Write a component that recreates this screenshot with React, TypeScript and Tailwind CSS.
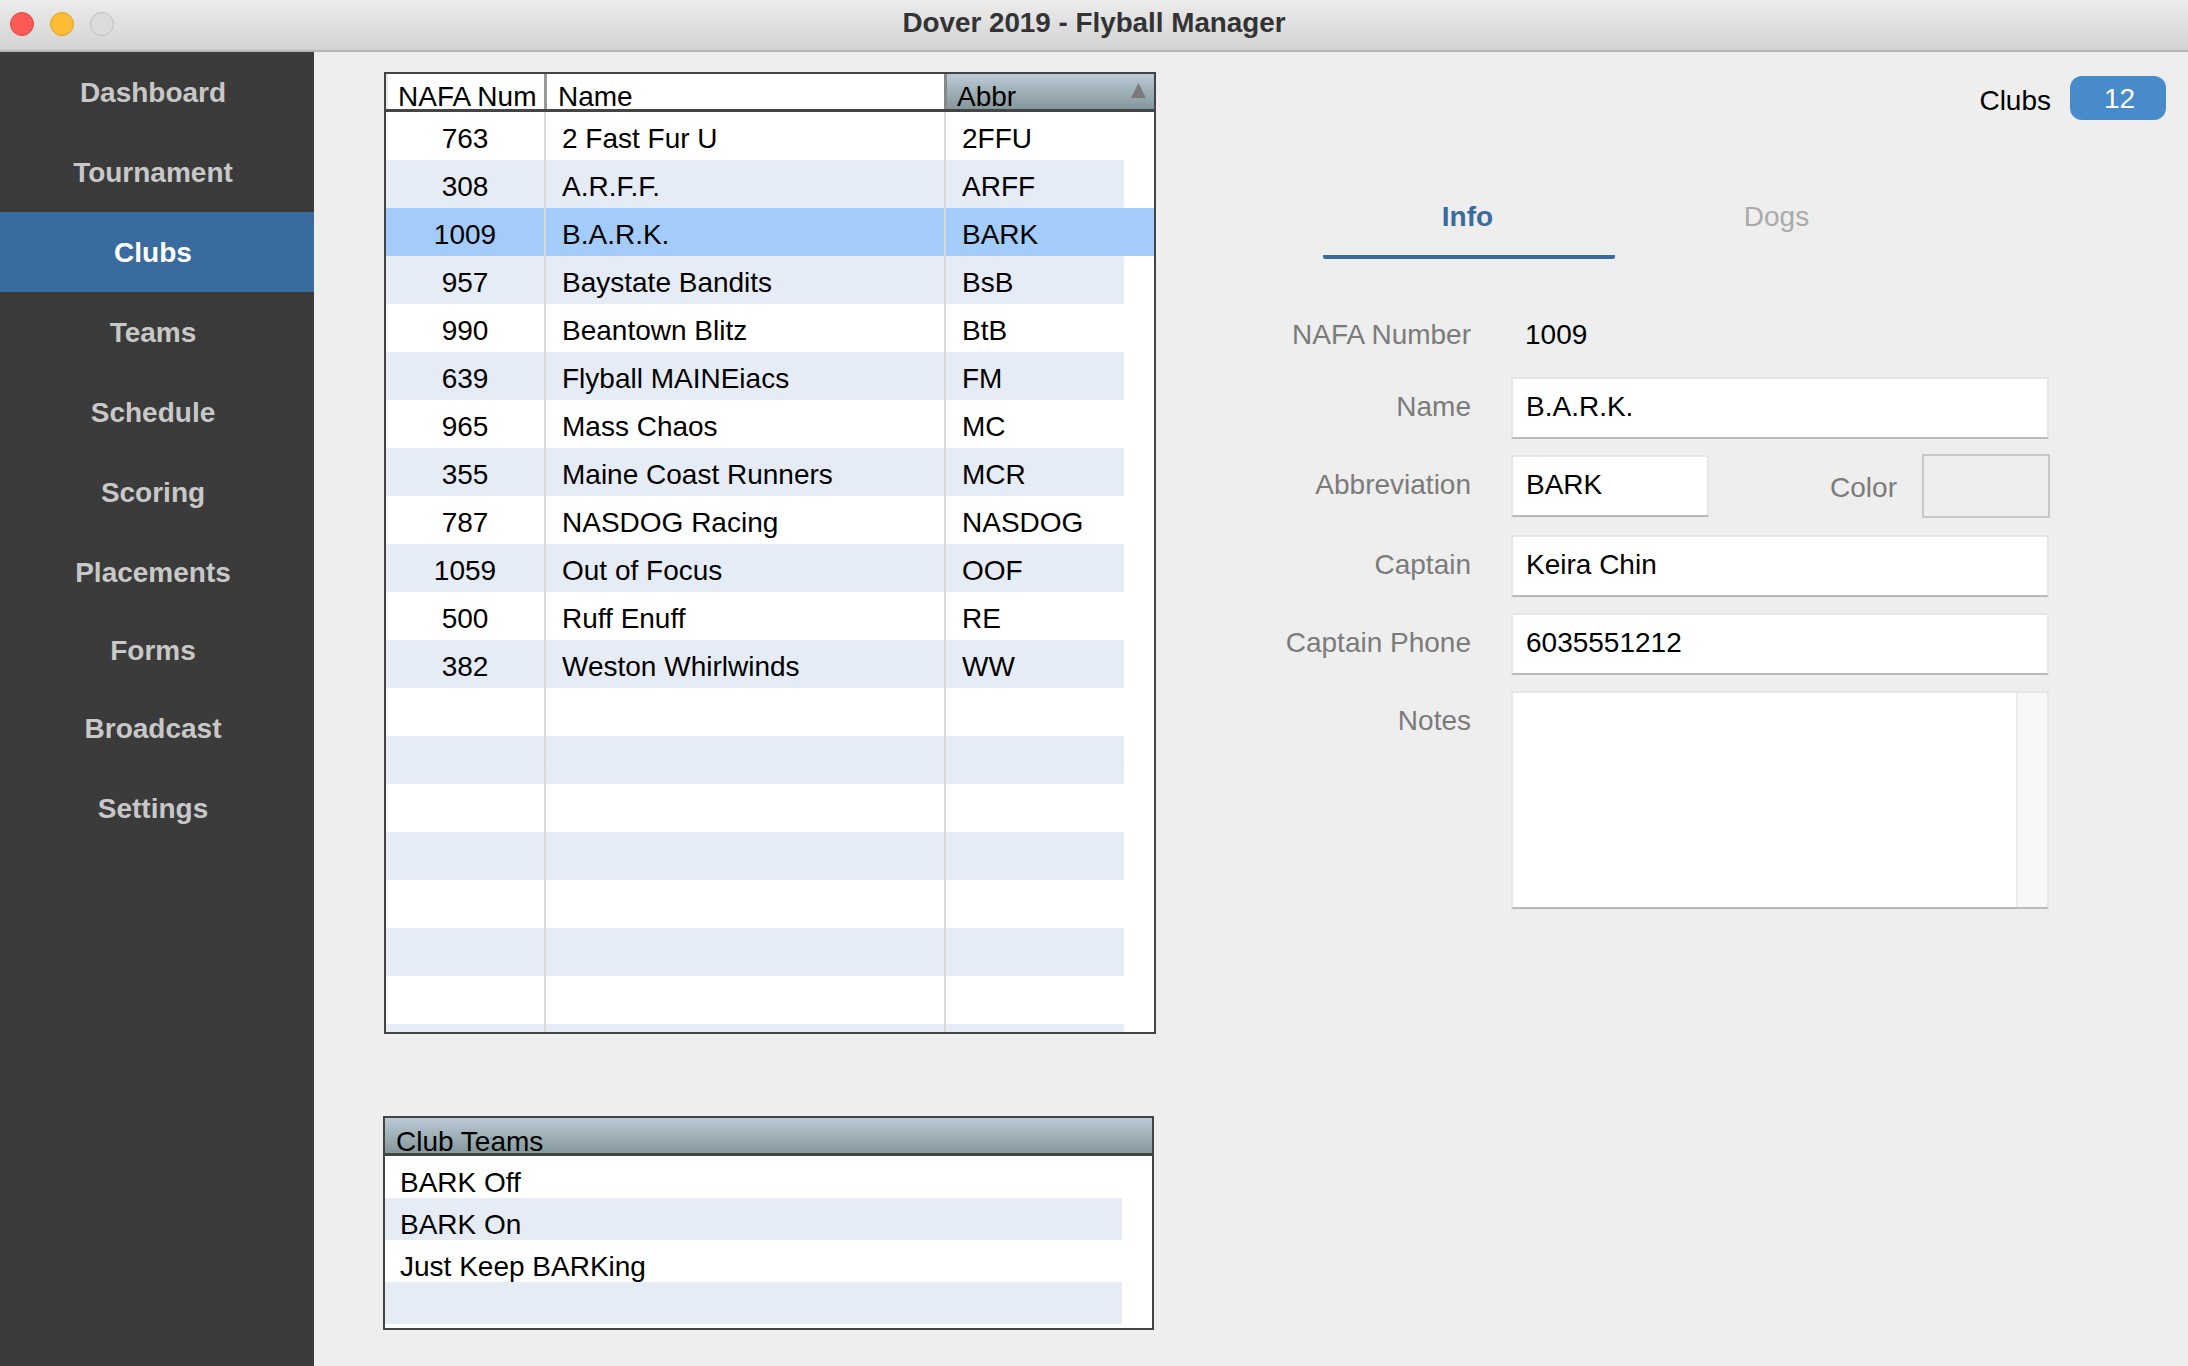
const NAV = [
  { label: "Dashboard", h: "h-[80px]" },
  { label: "Tournament", h: "h-[80px]" },
  { label: "Clubs", h: "h-[80px]", active: true },
  { label: "Teams", h: "h-[80px]" },
  { label: "Schedule", h: "h-[80px]" },
  { label: "Scoring", h: "h-[80px]" },
  { label: "Placements", h: "h-[79px]" },
  { label: "Forms", h: "h-[77px]" },
  { label: "Broadcast", h: "h-[80px]" },
  { label: "Settings", h: "h-[80px]" },
];

const CLUBS = [
  ["763", "2 Fast Fur U", "2FFU"],
  ["308", "A.R.F.F.", "ARFF"],
  ["1009", "B.A.R.K.", "BARK"],
  ["957", "Baystate Bandits", "BsB"],
  ["990", "Beantown Blitz", "BtB"],
  ["639", "Flyball MAINEiacs", "FM"],
  ["965", "Mass Chaos", "MC"],
  ["355", "Maine Coast Runners", "MCR"],
  ["787", "NASDOG Racing", "NASDOG"],
  ["1059", "Out of Focus", "OOF"],
  ["500", "Ruff Enuff", "RE"],
  ["382", "Weston Whirlwinds", "WW"],
  ["", "", ""],
  ["", "", ""],
  ["", "", ""],
  ["", "", ""],
  ["", "", ""],
  ["", "", ""],
  ["", "", ""],
  ["", "", ""],
];

const TEAMS = ["BARK Off", "BARK On", "Just Keep BARKing", ""];

function TitleBar() {
  return (
    <div className="relative flex h-[52px] shrink-0 items-center justify-center border-b-2 border-[#b4b4b4] bg-gradient-to-b from-[#ececec] to-[#d3d3d3]">
      <div className="absolute left-[10px] top-[12px] flex gap-4">
        <span className="h-6 w-6 rounded-full border border-[#e0443e] bg-[#fc5b57]" />
        <span className="h-6 w-6 rounded-full border border-[#dea123] bg-[#ffbc35]" />
        <span className="h-6 w-6 rounded-full border border-[#c0c0c0] bg-[#dcdcdc]" />
      </div>
      <span className="pb-[4px] text-[27.8px] font-bold leading-none text-[#333333]">Dover 2019 - Flyball Manager</span>
    </div>
  );
}

function Sidebar() {
  return (
    <nav className="w-[314px] shrink-0 bg-[#3b3b3b] text-[28px] font-bold text-[#c8c8c8]">
      {NAV.map((item) => (
        <div
          key={item.label}
          className={`flex items-center justify-center pr-[8px] pt-[2px] ${item.h} ${
            item.active ? "bg-[#3a6b9e] text-white" : ""
          }`}
        >
          {item.label}
        </div>
      ))}
    </nav>
  );
}

function ClubsTable() {
  return (
    <div className="h-[962px] w-[772px] overflow-hidden border-2 border-[#444444] bg-white text-[28px] leading-none text-black">
      <div className="flex h-[38px] border-b-[3px] border-[#444444]">
        <div className="flex w-[158px] items-end whitespace-nowrap border-l-2 border-[#e8e8e8] pb-[1px] pl-[10px] leading-[22px]">NAFA Num</div>
        <div className="flex w-[400px] items-end border-l-[3px] border-[#999999] pb-[1px] pl-[11px] leading-[22px]">Name</div>
        <div className="flex flex-1 items-end justify-between border-l-[3px] border-[#888888] bg-gradient-to-b from-[#bccad6] to-[#84979b] pb-[1px] pl-[10px] pr-[8px] leading-[22px]">
          <span>Abbr</span>
          <svg className="mb-[10px]" width="15" height="15" viewBox="0 0 15 15">
            <polygon points="7.5,0 15,15 0,15" fill="#7a7a7a" />
          </svg>
        </div>
      </div>
      {CLUBS.map((row, i) => {
        const selected = row[0] === "1009";
        return (
          <div
            key={i}
            className={`flex h-[48px] shrink-0 items-center ${
              selected ? "bg-[#a4ccfa]" : ""
            } ${i % 2 === 1 && !selected ? "bg-gradient-to-r from-[#e6ecf6] from-[738px] to-white to-[738px]" : ""}`}
          >
            <div className="flex h-full w-[158px] items-center justify-center pt-[6px]">{row[0]}</div>
            <div className="flex h-full w-[400px] items-center border-l-2 border-[#d8d8d8] pl-[16px] pt-[6px]">{row[1]}</div>
            <div className="flex h-full flex-1 items-center border-l-2 border-[#d8d8d8] pl-[16px] pt-[6px]">{row[2]}</div>
          </div>
        );
      })}
    </div>
  );
}

function TeamsList() {
  return (
    <div className="ml-[-1px] mt-[82px] h-[214px] w-[771px] overflow-hidden border-2 border-[#444444] bg-white text-[28px] leading-none text-black">
      <div className="flex h-[38px] items-end border-b-[3px] border-[#444444] bg-gradient-to-b from-[#bccad6] to-[#84979b] pb-[1px] pl-[11px] leading-[20px]">
        Club Teams
      </div>
      {TEAMS.map((team, i) => (
        <div
          key={i}
          className={`flex h-[42px] w-[737px] items-center pl-[15px] pt-[12px] ${i % 2 === 1 ? "bg-[#e6ecf6]" : ""}`}
        >
          {team}
        </div>
      ))}
    </div>
  );
}

function Field({ label, value, className = "" }: { label: string; value: string; className?: string }) {
  return (
    <div className={`flex items-center ${className}`}>
      <label className="w-[315px] pb-[2px] text-right text-[#7b7b7b]">{label}</label>
      <input
        readOnly
        value={value}
        className="ml-[40px] h-[62px] w-[538px] border-2 border-[#e6e6e6] border-b-[#b9b9b9] bg-white pb-[2px] pl-[13px] text-black outline-none"
      />
    </div>
  );
}

function DetailPanel() {
  return (
    <div className="flex flex-1 flex-col text-[28px] leading-none">
      <div className="flex items-center justify-end pr-[22px] pt-[24px]">
        <span className="pt-[6px] text-black">Clubs</span>
        <span className="ml-[19px] flex h-[44px] w-[96px] items-center justify-center rounded-[12px] bg-[#478bca] pl-[3px] pt-[1px] text-white">
          12
        </span>
      </div>
      <div className="ml-[167px] mt-[61px] flex gap-[17px]">
        <div className="flex h-[78px] w-[292px] items-center justify-center rounded-b-[2px] border-b-4 border-[#3a6b9e] pb-[2px] pr-[3px] font-bold text-[#3a6b9e]">
          Info
        </div>
        <div className="flex h-[78px] w-[292px] items-center justify-center pb-[6px] pr-[3px] text-[#aaaaaa]">Dogs</div>
      </div>
      <div className="mt-[52px] flex h-[48px] items-center">
        <span className="w-[315px] text-right text-[#7b7b7b]">NAFA Number</span>
        <span className="ml-[54px] text-black">1009</span>
      </div>
      <Field label="Name" value="B.A.R.K." className="mt-[18px]" />
      <div className="mt-[15px] flex h-[64px] items-center">
        <label className="w-[315px] pb-[2px] text-right text-[#7b7b7b]">Abbreviation</label>
        <input
          readOnly
          value="BARK"
          className="ml-[40px] h-[62px] w-[198px] border-2 border-[#e6e6e6] border-b-[#b9b9b9] bg-white pb-[2px] pl-[13px] text-black outline-none"
        />
        <span className="ml-[119px] w-[69px] pt-[4px] text-right text-[#7b7b7b]">Color</span>
        <span className="ml-[25px] h-[64px] w-[128px] border-2 border-[#c8c8c8] bg-[#eeeeee]" />
      </div>
      <Field label="Captain" value="Keira Chin" className="mt-[17px]" />
      <Field label="Captain Phone" value="6035551212" className="mt-[16px]" />
      <div className="mt-[16px] flex items-start">
        <label className="w-[315px] pt-[16px] text-right text-[#7b7b7b]">Notes</label>
        <div className="ml-[40px] flex h-[218px] w-[538px] border-2 border-[#e6e6e6] border-b-[#b9b9b9] bg-white">
          <div className="flex-1" />
          <div className="w-[31px] border-l-2 border-[#ececec] bg-[#f8f8f8]" />
        </div>
      </div>
    </div>
  );
}

export default function App() {
  return (
    <div className="flex h-[1366px] w-[2188px] flex-col overflow-hidden bg-[#eeeeee] font-['Liberation_Sans',Arial,sans-serif]">
      <TitleBar />
      <div className="flex flex-1">
        <Sidebar />
        <div className="w-[842px] shrink-0 pl-[70px] pt-[20px]">
          <ClubsTable />
          <TeamsList />
        </div>
        <DetailPanel />
      </div>
    </div>
  );
}
